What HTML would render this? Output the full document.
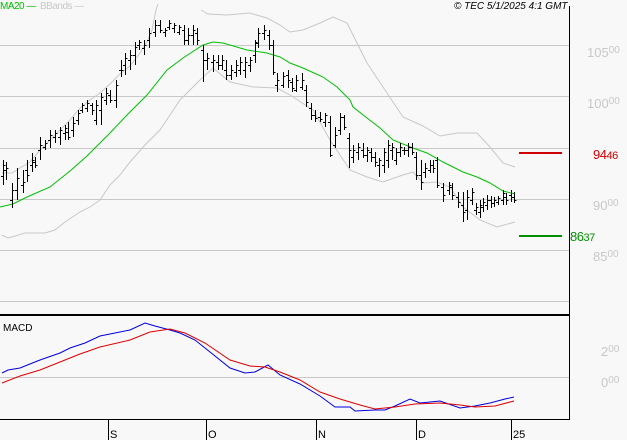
<!DOCTYPE html>
<html><head><meta charset="utf-8"><style>
html,body{margin:0;padding:0;background:#f8f8f8;}
svg{display:block;font-family:"Liberation Sans",sans-serif;}
</style></head><body>
<svg width="627" height="440" viewBox="0 0 627 440" xmlns="http://www.w3.org/2000/svg">
<rect width="627" height="440" fill="#f8f8f8"/>
<g stroke="#c8c8c8" stroke-width="1">
<line x1="0" y1="45.5" x2="569" y2="45.5"/>
<line x1="0" y1="96.5" x2="569" y2="96.5"/>
<line x1="0" y1="148.5" x2="569" y2="148.5"/>
<line x1="0" y1="199.5" x2="569" y2="199.5"/>
<line x1="0" y1="250.5" x2="569" y2="250.5"/>
<line x1="0" y1="301.5" x2="569" y2="301.5"/>
<line x1="0" y1="377.5" x2="569" y2="377.5"/>
</g>
<line x1="569.5" y1="6" x2="569.5" y2="420" stroke="#000"/>
<line x1="0" y1="315" x2="569" y2="315" stroke="#000" stroke-width="2"/>
<line x1="0" y1="419.5" x2="570" y2="419.5" stroke="#000"/>
<g stroke="#000"><line x1="108.5" y1="420" x2="108.5" y2="440"/><line x1="206.5" y1="420" x2="206.5" y2="440"/><line x1="316.5" y1="420" x2="316.5" y2="440"/><line x1="416.5" y1="420" x2="416.5" y2="440"/><line x1="511.5" y1="420" x2="511.5" y2="440"/></g>
<g font-size="11" fill="#000"><text x="110" y="438">S</text><text x="208" y="438">O</text><text x="318" y="438">N</text><text x="418" y="438">D</text><text x="513" y="438">25</text></g>
<g fill="none" stroke="#c8c8c8">
<polyline points="2,173 12,173 20,168 30,162 40,150 50,140 60,130 70,120 80,108 90,100 100,93 110,84 120,74 130,66 140,53 148,40 152,30 156,10 158,4"/>
<polyline points="201,10 208,14 227,15 250,13 267,18 280,25 290,32 303,30 320,23 333,17 347,23 357,43 367,63 387,93 403,117 423,126 440,136 457,133 477,133 490,147 503,163 515,167"/>
<polyline points="2,235 8,238 15,236 25,233 45,233 55,230 65,222 80,212 90,207 100,200 110,185 120,175 130,162 145,145 160,130 170,115 180,100 190,90 200,80 213,68 230,82 253,87 277,88 290,95 313,110 330,140 350,170 367,177 383,182 403,175 413,172 423,183 437,182 450,187 463,207 480,220 497,227 515,222"/>
</g>
<polyline fill="none" stroke="#00c000" points="0,207 13,204 27,197 50,187 70,171 87,156 100,143 110,133 127,115 147,95 167,70 183,58 203,45 213,42 223,43 247,50 267,53 280,57 290,63 303,68 323,77 337,87 350,100 353,107 367,118 380,128 393,140 413,148 427,153 443,162 463,172 477,177 490,183 503,191 515,194"/>
<path stroke="#000" fill="none" d="M3.5 160V185M1 176.5h2M3.5 165.5h2M6.5 162V180M4 170.5h2M6.5 168.5h2M12.5 183V208M10 200.5h2M12.5 190.5h2M17.5 168V200M15 190.5h2M17.5 178.5h2M23.5 170V193M21 185.5h2M23.5 182.5h2M27.5 160V182M25 170.5h2M27.5 175.5h2M32.5 153V172M30 165.5h2M32.5 160.5h2M35.5 157V168M33 162.5h2M35.5 165.5h2M40.5 137V160M38 150.5h2M40.5 145.5h2M45.5 140V150M43 147.5h2M45.5 143.5h2M50.5 130V148M48 140.5h2M50.5 135.5h2M55.5 130V143M53 137.5h2M55.5 133.5h2M60.5 127V145M58 137.5h2M60.5 130.5h2M65.5 125V140M63 133.5h2M65.5 128.5h2M68.5 122V140M66 132.5h2M68.5 137.5h2M73.5 117V137M71 130.5h2M73.5 123.5h2M78.5 110V125M76 120.5h2M78.5 113.5h2M82.5 103V113M80 110.5h2M82.5 105.5h2M87.5 100V112M85 108.5h2M87.5 103.5h2M92.5 103V115M90 105.5h2M92.5 110.5h2M96.5 100V125M94 120.5h2M96.5 105.5h2M101.5 93V125M99 110.5h2M101.5 97.5h2M106.5 88V105M104 100.5h2M106.5 93.5h2M110.5 90V103M108 95.5h2M110.5 100.5h2M116.5 80V108M114 100.5h2M116.5 85.5h2M121.5 60V77M119 70.5h2M121.5 70.5h2M125.5 53V75M123 65.5h2M125.5 58.5h2M130.5 50V70M128 60.5h2M130.5 55.5h2M135.5 42V65M133 55.5h2M135.5 47.5h2M139.5 40V50M137 45.5h2M139.5 42.5h2M144.5 40V55M142 48.5h2M144.5 45.5h2M149.5 28V48M147 40.5h2M149.5 33.5h2M155.5 20V37M153 32.5h2M155.5 25.5h2M160.5 20V33M158 25.5h2M160.5 30.5h2M165.5 28V37M163 32.5h2M165.5 30.5h2M169.5 20V30M167 27.5h2M169.5 23.5h2M174.5 23V33M172 28.5h2M174.5 25.5h2M179.5 25V35M177 32.5h2M179.5 27.5h2M184.5 25V45M182 30.5h2M184.5 40.5h2M188.5 28V45M186 40.5h2M188.5 35.5h2M193.5 25V45M191 35.5h2M193.5 30.5h2M197.5 28V45M195 33.5h2M197.5 40.5h2M203.5 45V82M201 50.5h2M203.5 60.5h2M207.5 53V70M205 60.5h2M207.5 58.5h2M213.5 55V72M211 62.5h2M213.5 60.5h2M218.5 55V70M216 62.5h2M218.5 65.5h2M222.5 55V70M220 65.5h2M222.5 60.5h2M226.5 60V80M224 70.5h2M226.5 75.5h2M231.5 65V80M229 75.5h2M231.5 70.5h2M236.5 60V77M234 72.5h2M236.5 65.5h2M240.5 57V75M238 70.5h2M240.5 62.5h2M245.5 57V78M243 70.5h2M245.5 62.5h2M250.5 57V72M248 65.5h2M250.5 60.5h2M255.5 40V63M253 55.5h2M255.5 42.5h2M258.5 28V48M256 43.5h2M258.5 33.5h2M264.5 25V40M262 33.5h2M264.5 30.5h2M269.5 30V50M267 35.5h2M269.5 45.5h2M273.5 40V75M271 45.5h2M273.5 72.5h2M277.5 73V92M275 85.5h2M277.5 80.5h2M283.5 72V88M281 85.5h2M283.5 76.5h2M288.5 70V88M286 75.5h2M288.5 80.5h2M292.5 78V92M290 82.5h2M292.5 88.5h2M296.5 75V92M294 90.5h2M296.5 80.5h2M302.5 73V90M300 87.5h2M302.5 80.5h2M306.5 85V107M304 90.5h2M306.5 102.5h2M311.5 103V120M309 108.5h2M311.5 115.5h2M315.5 110V122M313 115.5h2M315.5 118.5h2M320.5 112V122M318 117.5h2M320.5 119.5h2M325.5 113V127M323 122.5h2M325.5 115.5h2M330.5 116V157M328 122.5h2M330.5 155.5h2M335.5 127V148M333 145.5h2M335.5 135.5h2M340.5 113V135M338 130.5h2M340.5 117.5h2M344.5 115V130M342 117.5h2M344.5 127.5h2M349.5 133V168M347 138.5h2M349.5 150.5h2M353.5 145V163M351 157.5h2M353.5 150.5h2M358.5 143V160M356 152.5h2M358.5 147.5h2M363.5 143V158M361 150.5h2M363.5 155.5h2M367.5 147V162M365 155.5h2M367.5 150.5h2M371.5 148V162M369 152.5h2M371.5 157.5h2M375.5 152V167M373 157.5h2M375.5 162.5h2M379.5 158V177M377 165.5h2M379.5 160.5h2M384.5 148V173M382 165.5h2M384.5 152.5h2M388.5 140V168M386 160.5h2M388.5 145.5h2M392.5 143V160M390 150.5h2M392.5 147.5h2M396.5 148V165M394 160.5h2M396.5 152.5h2M400.5 143V157M398 152.5h2M400.5 147.5h2M404.5 147V155M402 150.5h2M404.5 150.5h2M408.5 143V157M406 150.5h2M408.5 147.5h2M412.5 143V155M410 147.5h2M412.5 152.5h2M416.5 152V180M414 157.5h2M416.5 175.5h2M421.5 160V190M419 175.5h2M421.5 182.5h2M425.5 163V178M423 172.5h2M425.5 168.5h2M430.5 160V173M428 170.5h2M430.5 165.5h2M433.5 160V173M431 165.5h2M433.5 168.5h2M437.5 157V188M435 160.5h2M437.5 185.5h2M443.5 183V202M441 187.5h2M443.5 195.5h2M449.5 182V195M447 190.5h2M449.5 185.5h2M452.5 183V200M450 187.5h2M452.5 195.5h2M458.5 192V208M456 197.5h2M458.5 202.5h2M463.5 192V222M461 205.5h2M463.5 212.5h2M467.5 190V220M465 210.5h2M467.5 197.5h2M472.5 188V205M470 200.5h2M472.5 192.5h2M476.5 203V215M474 210.5h2M476.5 207.5h2M480.5 200V218M478 212.5h2M480.5 205.5h2M483.5 198V212M481 207.5h2M483.5 202.5h2M487.5 195V210M485 205.5h2M487.5 200.5h2M491.5 196V208M489 200.5h2M491.5 203.5h2M494.5 197V207M492 203.5h2M494.5 200.5h2M498.5 196V205M496 202.5h2M498.5 198.5h2M503.5 190V205M501 200.5h2M503.5 193.5h2M506.5 193V205M504 197.5h2M506.5 200.5h2M511.5 190V202M509 195.5h2M511.5 197.5h2M514.5 192V203M512 197.5h2M514.5 200.5h2"/>
<line x1="519" y1="153" x2="562" y2="153" stroke="#d00000" stroke-width="2"/>
<line x1="519" y1="236" x2="562" y2="236" stroke="#009000" stroke-width="2"/>
<g font-size="13" fill="#c8c8c8">
<text x="587" y="57">105<tspan font-size="10" dy="-4">00</tspan></text>
<text x="587" y="108">100<tspan font-size="10" dy="-4">00</tspan></text>
<text x="593" y="210">90<tspan font-size="10" dy="-4">00</tspan></text>
<text x="593" y="261">85<tspan font-size="10" dy="-4">00</tspan></text>
<text x="601" y="356">2<tspan font-size="10" dy="-4">00</tspan></text>
<text x="601" y="387">0<tspan font-size="10" dy="-4">00</tspan></text>
</g>
<text x="593" y="159" font-size="13" fill="#d00000" letter-spacing="-0.5">94<tspan font-size="11">46</tspan></text>
<text x="570" y="241" font-size="13" fill="#009000" letter-spacing="-0.5">86<tspan font-size="11">37</tspan></text>
<text x="0" y="9" font-size="10" fill="#00c000" letter-spacing="-0.5">MA20 —</text>
<text x="40" y="9" font-size="10" fill="#c8c8c8" letter-spacing="-0.5">BBands —</text>
<text x="454" y="9" font-size="10" font-style="italic" fill="#000">© TEC 5/1/2025 4:1 GMT</text>
<text x="3" y="331" font-size="10" fill="#000">MACD</text>
<polyline fill="none" stroke="#0000e0" points="2,373 8,370 20,368 40,360 60,353 70,348 85,343 100,336 115,333 130,330 145,323 155,326 170,330 180,333 195,340 210,352 230,368 245,373 255,372 268,365 280,375 300,384 320,396 335,407 350,407 355,411 375,410 385,410 395,406 410,399 420,403 440,401 460,408 475,406 490,403 505,399 514,397"/>
<polyline fill="none" stroke="#e00000" points="2,383 20,376 40,370 60,362 80,354 100,347 130,340 150,332 170,329 185,333 205,343 230,360 250,366 265,367 280,372 300,380 320,392 340,399 360,405 375,409 395,407 415,404 440,403 460,405 475,407 495,406 514,401"/>
</svg>
</body></html>
